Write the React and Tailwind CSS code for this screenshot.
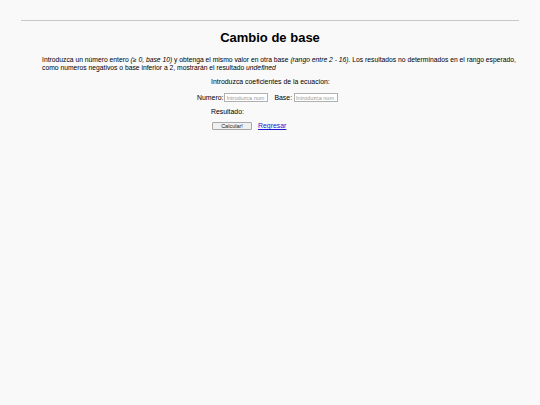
export default function App() {
  return (
    <div className="min-h-[405px] w-[540px] bg-[#f9f9f9] pt-[20px]" style={{ fontFamily: '"Liberation Sans", Arial, sans-serif' }}>
      <div className="mx-[21px] h-px bg-[#c8c8c8]" />
      <h1 className="mt-[9px] text-center text-[13px] font-bold leading-[16px] text-black">Cambio de base</h1>
      <p className="ml-[42px] mr-[19px] mt-[10px] text-[6.75px] leading-[8px] text-black">
        Introduzca un número entero <i>(≥ 0, base 10)</i> y obtenga el mismo valor en otra base <i>(rango entre 2 - 16)</i>. Los resultados no determinados en el rango esperado, como numeros negativos o base inferior a 2, mostrarán el resultado <i>undefined</i>
      </p>
      <div className="mt-[6px] flex flex-col items-start text-[6.9px] leading-[8px] text-black">
        <div className="ml-[211px]">Introduzca coeficientes de la ecuacion:</div>
        <div className="ml-[197px] mt-[7px] flex items-center">
          <span>Numero:</span>
          <input className="ml-[1px] h-[9px] w-[44px] border border-[#b0b0b0] bg-white px-[1px] text-[5.5px] placeholder:text-[#9a9a9a]" placeholder="Introduzca num" />
          <span className="ml-[6px]">Base:</span>
          <input className="ml-[2px] h-[9px] w-[44px] border border-[#b0b0b0] bg-white px-[1px] text-[5.5px] placeholder:text-[#9a9a9a]" placeholder="Introduzca num" />
        </div>
        <div className="ml-[211px] mt-[6px]">Resultado:</div>
        <div className="ml-[212px] mt-[6px] flex items-center gap-[6px]">
          <button className="h-[8px] w-[40px] rounded-[1px] border border-[#a8a8a8] bg-[#f0f0f0] text-[5.5px] leading-[6px] text-[#222]">Calcular!</button>
          <a href="#" className="text-[#1a1ad0] underline">Regresar</a>
        </div>
      </div>
    </div>
  );
}
